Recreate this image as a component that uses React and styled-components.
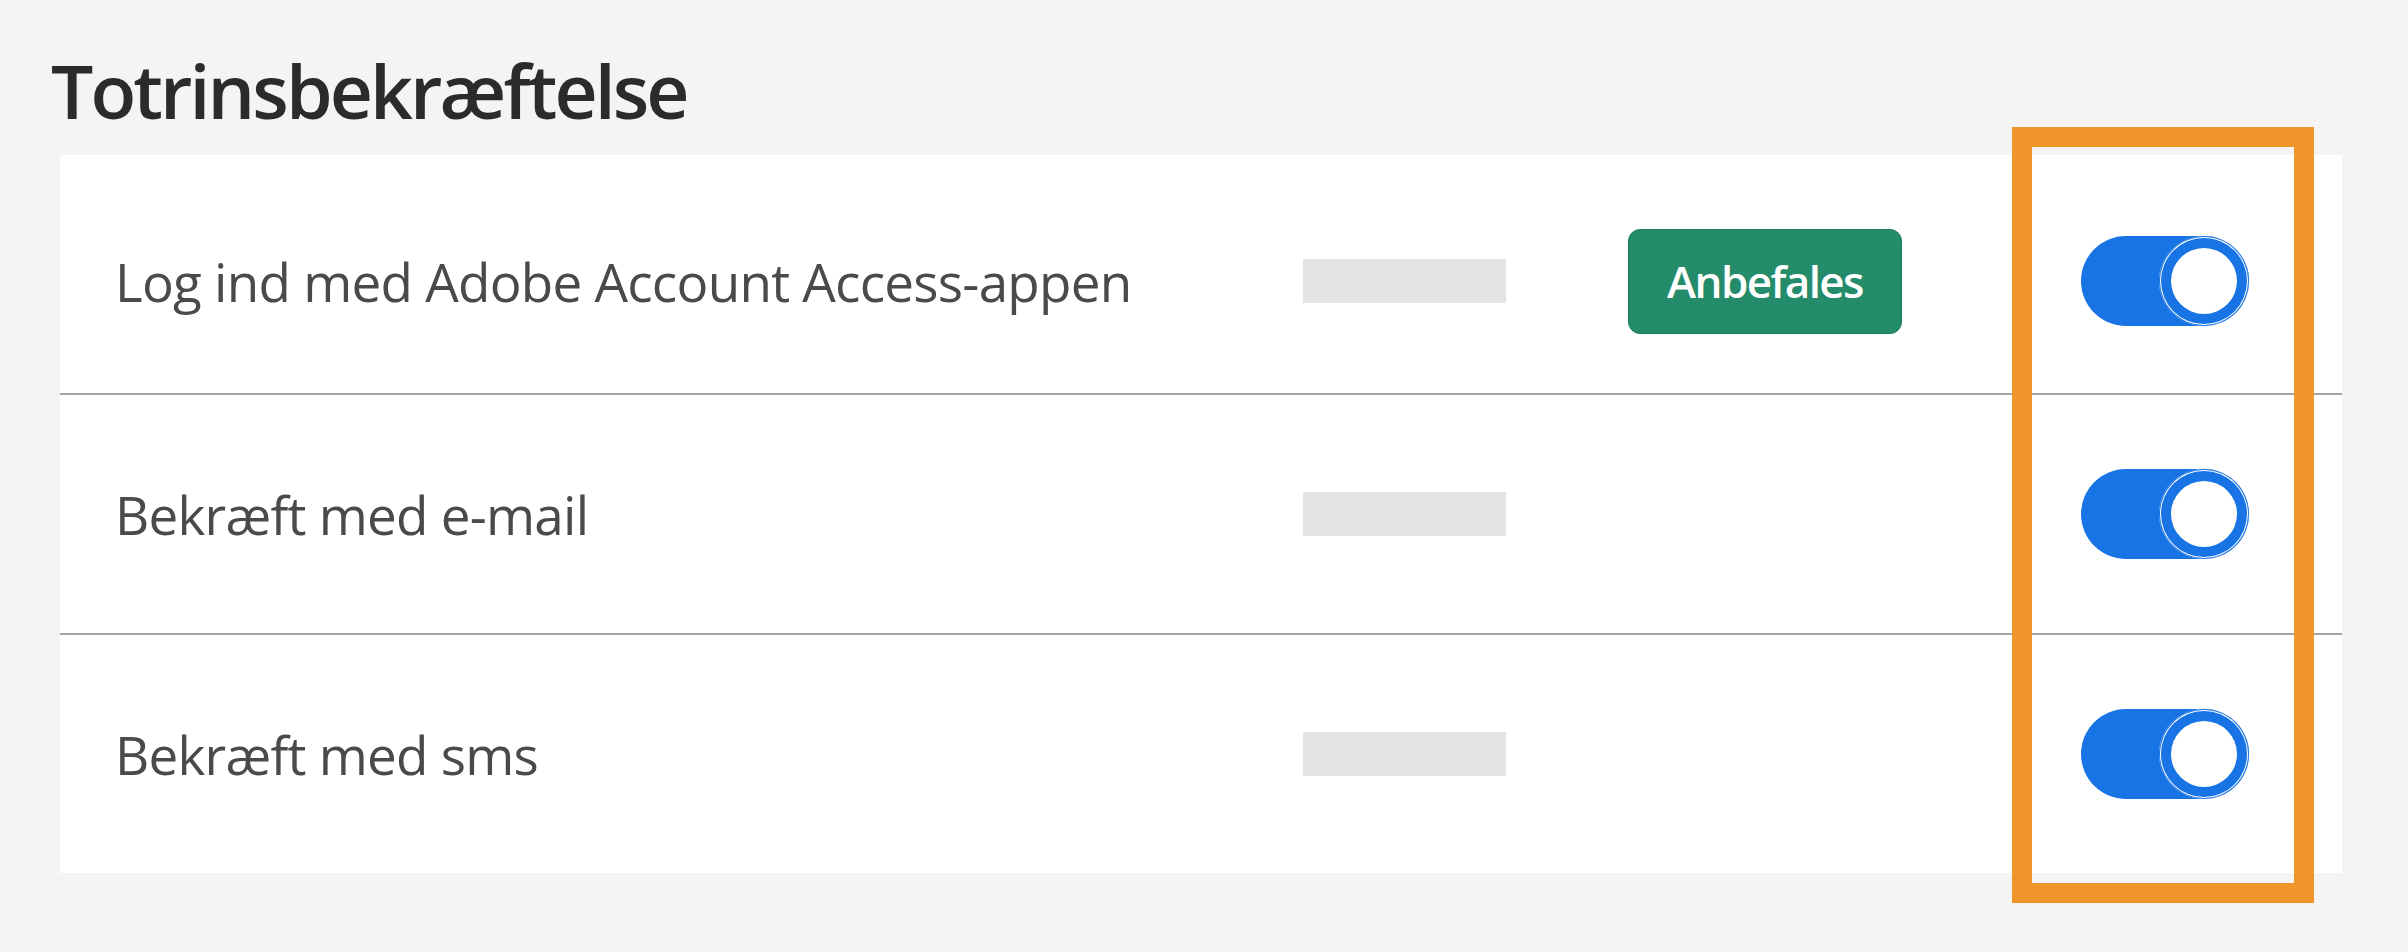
import React from 'react';
import styled, { createGlobalStyle } from 'styled-components';

const METHODS = [
  { id: 'app', label: 'Log ind med Adobe Account Access-appen', recommended: true },
  { id: 'email', label: 'Bekræft med e-mail' },
  { id: 'sms', label: 'Bekræft med sms' },
];

const BLUE = '#1873e4';

const GlobalStyle = createGlobalStyle`
  html, body {
    margin: 0;
    padding: 0;
    background: #f4f4f4;
  }
  body {
    font-family: "Open Sans", "Noto Sans", Arial, sans-serif;
  }
`;

const Page = styled.div`
  width: 2408px;
  height: 952px;
  box-sizing: border-box;
  padding-top: 52px;
  background: #f4f4f4;
`;

const Title = styled.h2`
  margin: 0 0 27px 51px;
  font-size: 75px;
  line-height: 76px;
  font-weight: 600;
  letter-spacing: -2.9px;
  color: #2b2b2b;
`;

const Card = styled.section`
  position: relative;
  margin-left: 60px;
  width: 2282px;
  background: #ffffff;
`;

const Row = styled.div`
  display: grid;
  grid-template-columns: 1188px 325px 453px 168px;
  align-items: center;
  box-sizing: border-box;
  height: ${({ $first }) => ($first ? '238px' : '240px')};
  padding-left: 55px;
  padding-top: ${({ $first }) => ($first ? '14px' : '0')};
  border-top: ${({ $first }) => ($first ? 'none' : '2px solid #a3a3a3')};
`;

const Label = styled.span`
  font-size: 53px;
  font-weight: 400;
  letter-spacing: -0.75px;
  color: #4a4a4a;
  white-space: nowrap;
`;

const Placeholder = styled.div`
  width: 203px;
  height: 44px;
  background: #e4e4e4;
`;

const Badge = styled.span`
  display: inline-flex;
  align-items: center;
  justify-content: center;
  justify-self: start;
  width: 274px;
  height: 105px;
  box-sizing: border-box;
  border-radius: 12px;
  border: 1px solid #1f7d5f;
  background: #248b6b;
  color: #ffffff;
  font-size: 44px;
  font-weight: 600;
  letter-spacing: -1.6px;
`;

const Track = styled.span`
  display: flex;
  justify-content: flex-end;
  width: 168px;
  height: 90px;
  border-radius: 45px;
  background: ${BLUE};
`;

const Knob = styled.span`
  display: flex;
  align-items: center;
  justify-content: center;
  width: 90px;
  height: 90px;
  border-radius: 50%;
  background: ${BLUE};
  box-shadow: inset 0 0 0 1px ${BLUE}, inset 0 0 0 2px #ffffff;

  &::after {
    content: '';
    width: 66px;
    height: 66px;
    border-radius: 50%;
    background: #ffffff;
  }
`;

const Highlight = styled.div`
  position: absolute;
  left: 1952px;
  top: -28px;
  width: 302px;
  height: 776px;
  box-sizing: border-box;
  border: 20px solid #f0952a;
  pointer-events: none;
`;

const Toggle = () => (
  <Track role="switch" aria-checked="true">
    <Knob />
  </Track>
);

export default function App() {
  return (
    <Page>
      <GlobalStyle />
      <Title>Totrinsbekræftelse</Title>
      <Card>
        {METHODS.map(({ id, label, recommended }, index) => (
          <Row key={id} $first={index === 0}>
            <Label>{label}</Label>
            <Placeholder />
            <div>{recommended && <Badge>Anbefales</Badge>}</div>
            <Toggle />
          </Row>
        ))}
        <Highlight />
      </Card>
    </Page>
  );
}
